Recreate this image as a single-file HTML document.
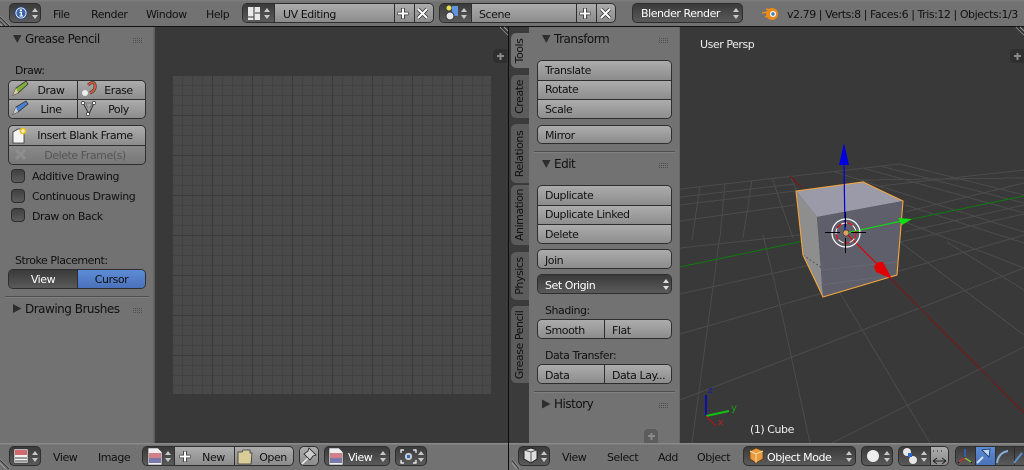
<!DOCTYPE html>
<html><head><meta charset="utf-8"><style>
html,body{margin:0;padding:0;background:#393939;width:1024px;height:470px;overflow:hidden}
body{position:relative;font:11px/20px "DejaVu Sans","Liberation Sans",sans-serif;letter-spacing:-.45px;color:#111}
div,span.t{position:absolute;box-sizing:border-box;white-space:nowrap}
svg{position:absolute;left:0;top:0;overflow:visible}
.bar{background:#727272;left:0;width:1024px}
.p{background:#727272}
.g{border:1px solid #2e2e2e;border-radius:5px;overflow:hidden}
.c{top:0;bottom:0;background:linear-gradient(#acacac,#8c8c8c);text-align:center;line-height:22px}
.r{left:0;right:0;background:linear-gradient(#acacac,#8c8c8c);text-align:center;line-height:20px}
.l{text-align:left;padding-left:7px}
.d{background:linear-gradient(#3a3a3a,#5a5a5a);color:#fff}
.x{border-left:1px solid #2e2e2e}.y{border-top:1px solid #2e2e2e}
.dis{background:linear-gradient(#8a8a8a,#777);color:#555}
.h{font-size:12px;letter-spacing:-.5px}
.tab{left:511px;width:18px;border-radius:5px 0 0 5px;background:#5c5c5c;color:#111}
.tab span{position:absolute;left:50%;top:50%;transform:translate(-50%,-50%) rotate(-90deg);line-height:14px;white-space:nowrap}
.ck{left:11px;width:14px;height:14px;border:1px solid #2e2e2e;border-radius:4px;background:linear-gradient(#404040,#5c5c5c)}
</style></head><body>

<!-- 3D viewport base -->
<div style="left:680px;top:27px;width:344px;height:416px;background:#393939"></div>
<!-- UV canvas -->
<div style="left:155px;top:27px;width:353px;height:416px;background:#393939"></div>
<div style="left:172px;top:75px;width:319px;height:319px;background-color:#494949;background-image:linear-gradient(90deg,#393939 1px,transparent 1px),linear-gradient(#393939 1px,transparent 1px),linear-gradient(90deg,#424242 1px,transparent 1px),linear-gradient(#424242 1px,transparent 1px);background-size:40px 40px,40px 40px,10px 10px,10px 10px;background-position:0 0,0 0,0 0,0 0"></div>

<!-- header -->
<div class="bar" style="top:0;height:26px;background:linear-gradient(#7c7c7c 1px,#727272 2px)"></div>
<div style="left:0;top:26px;width:1024px;height:1px;background:#111"></div>
<div class="bar" style="top:443px;height:27px;background:linear-gradient(#8a8a8a 1px,#727272 2px)"></div>
<div style="left:508px;top:27px;width:1px;height:443px;background:#0c0c0c"></div>

<!-- left sidebar -->
<div class="p" style="left:0;top:27px;width:154px;height:416px;border-right:1px solid #666"></div>
<div style="left:154px;top:27px;width:1px;height:416px;background:#5e5e5e"></div>
<svg width="1024" height="470" style="pointer-events:none">
<path d="M13 35h8.5l-4.2 8z" fill="#2e2e2e"/>
<path d="M13 304l8.5 4.5-8.5 4.5z" fill="#2e2e2e"/>
<g fill="none" stroke="#4e4e4e" stroke-dasharray="1 1"><path d="M133 38.5h10M133 40.5h10M133 42.5h10M133 308.5h10M133 310.5h10M133 312.5h10"/></g>
</svg>
<span class="t h" style="position:absolute;left:25px;top:29px">Grease Pencil</span>
<span class="t" style="position:absolute;left:15px;top:61px">Draw:</span>
<div class="g" style="left:8px;top:80px;width:138px;height:39px">
 <div class="r" style="top:0;height:18px;right:auto;width:68px;padding-left:16px">Draw</div>
 <div class="r x" style="top:0;height:18px;left:68px;padding-left:14px">Erase</div>
 <div class="r y" style="top:18px;height:19px;right:auto;width:68px;padding-left:16px">Line</div>
 <div class="r x y" style="top:18px;height:19px;left:68px;padding-left:14px">Poly</div>
</div>
<div class="g" style="left:8px;top:125px;width:138px;height:40px">
 <div class="r" style="top:0;height:19px;padding-left:16px">Insert Blank Frame</div>
 <div class="r y dis" style="top:19px;height:19px;padding-left:16px">Delete Frame(s)</div>
</div>
<div class="ck" style="top:169px"></div><span class="t" style="position:absolute;left:32px;top:167px">Additive Drawing</span>
<div class="ck" style="top:189px"></div><span class="t" style="position:absolute;left:32px;top:187px">Continuous Drawing</span>
<div class="ck" style="top:208px"></div><span class="t" style="position:absolute;left:32px;top:207px">Draw on Back</span>
<span class="t" style="position:absolute;left:15px;top:251px">Stroke Placement:</span>
<div class="g" style="left:8px;top:269px;width:138px;height:20px">
 <div class="c d" style="left:0;width:68px;line-height:20px">View</div>
 <div class="c x" style="left:68px;right:0;background:linear-gradient(#5d8cd6,#4a72ba);line-height:20px">Cursor</div>
</div>
<div style="left:5px;top:296px;width:144px;height:1px;background:#4f4f4f"></div>
<div style="left:5px;top:297px;width:144px;height:1px;background:#808080"></div>
<span class="t h" style="position:absolute;left:25px;top:299px">Drawing Brushes</span>

<!-- right tabs column -->
<div style="left:509px;top:27px;width:20px;height:416px;background:#3b3b3b"></div>
<div class="tab" style="top:33px;height:35px;background:#727272"><span>Tools</span></div>
<div class="tab" style="top:75px;height:43px"><span>Create</span></div>
<div class="tab" style="top:124px;height:59px"><span>Relations</span></div>
<div class="tab" style="top:185px;height:60px"><span>Animation</span></div>
<div class="tab" style="top:252px;height:48px"><span>Physics</span></div>
<div class="tab" style="top:306px;height:77px"><span>Grease Pencil</span></div>

<!-- right panel -->
<div class="p" style="left:529px;top:27px;width:151px;height:416px"></div>
<div style="left:679px;top:27px;width:1px;height:416px;background:#666"></div>
<svg width="1024" height="470">
<path d="M542 35h8.5l-4.2 8z" fill="#2e2e2e"/>
<path d="M542 160h8.5l-4.2 8z" fill="#2e2e2e"/>
<path d="M542 399.500l8.500 4.500-8.500 4.500z" fill="#2e2e2e"/>
<g fill="none" stroke="#4e4e4e" stroke-dasharray="1 1"><path d="M659 38.500h10M659 40.500h10M659 42.500h10M659 163.500h10M659 165.500h10M659 167.500h10M659 403.500h10M659 405.500h10M659 407.500h10"/></g>
</svg>
<span class="t h" style="position:absolute;left:554px;top:29px">Transform</span>
<div class="g" style="left:537px;top:60px;width:135px;height:59px">
 <div class="r l" style="top:0;height:19px">Translate</div>
 <div class="r l y" style="top:19px;height:20px;line-height:18px">Rotate</div>
 <div class="r l y" style="top:38px;height:20px">Scale</div>
</div>
<div class="g" style="left:537px;top:125px;width:135px;height:19px"><div class="r l" style="top:0;bottom:0">Mirror</div></div>
<div style="left:534px;top:151px;width:141px;height:1px;background:#4f4f4f"></div>
<div style="left:534px;top:152px;width:141px;height:1px;background:#808080"></div>
<span class="t h" style="position:absolute;left:554px;top:154px">Edit</span>
<div class="g" style="left:537px;top:185px;width:135px;height:59px">
 <div class="r l" style="top:0;height:19px">Duplicate</div>
 <div class="r l y" style="top:19px;height:20px;line-height:18px">Duplicate Linked</div>
 <div class="r l y" style="top:38px;height:20px">Delete</div>
</div>
<div class="g" style="left:537px;top:249px;width:135px;height:20px"><div class="r l" style="top:0;bottom:0;line-height:22px">Join</div></div>
<div class="g" style="left:537px;top:274px;width:135px;height:20px"><div class="r l d" style="top:0;bottom:0;line-height:22px">Set Origin</div></div>
<svg width="1024" height="470"><path d="M663 283l3-4 3 4zM663 286l3 4 3-4z" fill="#ddd"/></svg>
<span class="t" style="position:absolute;left:545px;top:301px">Shading:</span>
<div class="g" style="left:537px;top:319px;width:135px;height:20px">
 <div class="c l" style="left:0;width:66px">Smooth</div><div class="c l x" style="left:66px;right:0">Flat</div>
</div>
<span class="t" style="position:absolute;left:545px;top:346px">Data Transfer:</span>
<div class="g" style="left:537px;top:364px;width:135px;height:20px">
 <div class="c l" style="left:0;width:66px">Data</div><div class="c l x" style="left:66px;right:0">Data Lay...</div>
</div>
<div style="left:534px;top:391px;width:141px;height:1px;background:#4f4f4f"></div>
<div style="left:534px;top:392px;width:141px;height:1px;background:#808080"></div>
<span class="t h" style="position:absolute;left:554px;top:394px">History</span>
<div style="left:644px;top:429px;width:14px;height:14px;background:#5c5c5c;border-radius:4px 4px 0 0"></div>
<div style="left:493px;top:49px;width:14px;height:14px;background:#2f2f2f;border-radius:4px 0 0 4px"></div>
<div style="left:1010px;top:49px;width:14px;height:14px;background:#2f2f2f;border-radius:4px 0 0 4px"></div>

<!-- viewport graphics -->
<svg width="1024" height="470">
<clipPath id="v"><rect x="680" y="27" width="344" height="416"/></clipPath>
<g clip-path="url(#v)" shape-rendering="crispEdges">
<g stroke="#4a4a4a" fill="none">
<path d="M680 248L800 235M680 294L810 265M680 334L1024 235M680 400L1024 268M832 443L1024 347M900 242L1024 214"/>
<path d="M680 189L900 164M680 197L795 184M680 205L795 191M680 221L795 205M905 212L1024 183M905 232L1024 205M860 180L1024 178M880 186L1024 170"/>
<path d="M763 235L780 305L810 443M720 235L692 443M820 260L863 331L930 443M900 242L1024 335M947 242L1024 290M905 222L1024 268"/>
<path d="M900 164L1024 195M863 168L1024 213M905 205L1024 243M752 180L743 238M725 183L720 238M772 178L793 238M835 172L1024 232M790 175L796 190M700 186L692 240M880 166L1024 203"/>
</g>
<path d="M680 267L808 240" stroke="#0d7a0d"/>
<path d="M912 219L1024 196" stroke="#0d7a0d"/>
<path d="M890 278L1024 413" stroke="#7d1414"/>
<path d="M790 176L802 188" stroke="#7d1414"/>
</g>
<!-- cube -->
<path d="M796 191L863 182L903 201L817 217Z" fill="#9a9aa8"/>
<path d="M796 191L817 217L823 297L803 255Z" fill="#8e8e8e"/>
<path d="M817 217L903 201L897 275L823 297Z" fill="#5f5f6b"/>
<path d="M821 270L897 262M821 285L897 275" stroke="#686873" fill="none"/>
<path d="M796 191L803 255M803 255L822 268" stroke="#555" stroke-dasharray="2 2" fill="none"/>
<path d="M796 191L863 182L903 201L897 275L823 297L803 255Z" fill="none" stroke="#f5a63c" stroke-width="1.1"/>
<!-- manipulator -->
<path d="M845 232L844 165" stroke="#0000dd" stroke-width="1.2"/>
<path d="M844 143L849 165H839Z" fill="#0000dd"/>
<path d="M846 233L902 221" stroke="#12d812" stroke-width="1.2"/>
<path d="M912 219L898 218L902 225Z" fill="#10e010"/>
<path d="M846 233L880 267" stroke="#dd0000" stroke-width="1.2"/>
<path d="M892 279L876 272L874 266L878 262L883 262Z" fill="#e00000"/>
<circle cx="846" cy="233" r="14" fill="none" stroke="#fff" stroke-width="1.2"/>
<circle cx="846" cy="233" r="10" fill="none" stroke="#fff" stroke-width="1"/>
<circle cx="846" cy="233" r="10" fill="none" stroke="#e00000" stroke-width="1.1" stroke-dasharray="6 6"/>
<path d="M825 232.500h15M851 232.500h15M845.500 212v15M845.500 238v15" stroke="#000" stroke-width="1"/>
<circle cx="846" cy="233" r="3" fill="#e0a060" stroke="#333" stroke-width=".6"/>
<!-- axis widget -->
<path d="M706 395V416" stroke="#0000d0" stroke-width="1.5"/>
<path d="M706 416L729 411" stroke="#12c012" stroke-width="2"/>
<path d="M706 416L716 426" stroke="#c01010" stroke-width="1"/>
<text x="708" y="393" font-family="DejaVu Sans" font-size="9" fill="#1818c0">z</text>
<text x="731" y="411" font-family="DejaVu Sans" font-size="10" fill="#18a018">y</text>
<text x="718" y="425" font-family="DejaVu Sans" font-size="9" fill="#c02020">x</text>
<!-- plus marks -->
<path d="M497 56h7M500.500 53v7M1014 56h7M1017.500 53v7M648 436h7M651.500 433v7" stroke="#8a8a8a" stroke-width="2"/>
<!-- corner hatches -->
<g stroke="#9a9a9a" stroke-width="1"><path d="M0 16L10 26M0 20L6 26M0 24L2 26M0 459L10 469M0 463L6 469M512 459L520 469M512 463L517 469M1016 27L1024 35M1020 27L1024 31M500 27L508 35M504 27L508 31"/></g>
<g stroke="#333" stroke-width="1"><path d="M0 17L9 26M0 21L5 26M0 460L9 469M512 460L519 469M1017 27L1024 34M501 27L508 34"/></g>
</svg>
<span class="t" style="position:absolute;left:700px;top:35px;color:#eee">User Persp</span>
<span class="t" style="position:absolute;left:750px;top:420px;color:#eee">(1) Cube</span>

<!-- top header widgets -->
<div class="g d" style="left:9px;top:3px;width:32px;height:20px"></div>
<span class="t" style="position:absolute;left:53px;top:5px">File</span>
<span class="t" style="position:absolute;left:91px;top:5px">Render</span>
<span class="t" style="position:absolute;left:146px;top:5px">Window</span>
<span class="t" style="position:absolute;left:206px;top:5px">Help</span>

<div class="g" style="left:242px;top:3px;width:192px;height:20px">
 <div class="c d" style="left:0;width:31px"></div>
 <div class="c l x" style="left:31px;width:120px;padding-left:8px">UV Editing</div>
 <div class="c x" style="left:151px;width:20px"></div>
 <div class="c x" style="left:171px;right:0"></div>
</div>
<div class="g" style="left:439px;top:3px;width:177px;height:20px">
 <div class="c d" style="left:0;width:31px"></div>
 <div class="c l x" style="left:31px;width:105px;padding-left:7px">Scene</div>
 <div class="c x" style="left:136px;width:20px"></div>
 <div class="c x" style="left:156px;right:0"></div>
</div>
<div class="g d" style="left:632px;top:3px;width:111px;height:20px;padding-left:8px;line-height:20px">Blender Render</div>
<span class="t" style="position:absolute;left:787px;top:5px">v2.79 | Verts:8 | Faces:6 | Tris:12 | Objects:1/3</span>

<!-- footer left -->
<div class="g d" style="left:9px;top:446px;width:32px;height:20px"></div>
<span class="t" style="position:absolute;left:53px;top:448px">View</span>
<span class="t" style="position:absolute;left:98px;top:448px">Image</span>
<div class="g" style="left:142px;top:446px;width:152px;height:20px">
 <div class="c d" style="left:0;width:31px"></div>
 <div class="c x" style="left:31px;width:60px;padding-left:18px">New</div>
 <div class="c x" style="left:91px;right:0;padding-left:18px">Open</div>
</div>
<div class="g" style="left:299px;top:446px;width:20px;height:20px"><div class="c" style="left:0;right:0"></div></div>
<div class="g d" style="left:324px;top:446px;width:66px;height:20px;padding-left:23px;line-height:22px">View</div>
<div class="g d" style="left:395px;top:446px;width:32px;height:20px"></div>

<!-- footer right -->
<div class="g d" style="left:518px;top:446px;width:32px;height:20px"></div>
<span class="t" style="position:absolute;left:562px;top:448px">View</span>
<span class="t" style="position:absolute;left:607px;top:448px">Select</span>
<span class="t" style="position:absolute;left:658px;top:448px">Add</span>
<span class="t" style="position:absolute;left:697px;top:448px">Object</span>
<div class="g d" style="left:743px;top:446px;width:113px;height:20px;padding-left:23px;line-height:22px">Object Mode</div>
<div class="g d" style="left:861px;top:446px;width:32px;height:20px"></div>
<div class="g" style="left:898px;top:446px;width:51px;height:20px">
 <div class="c d" style="left:0;width:31px"></div><div class="c x" style="left:31px;right:0"></div>
</div>
<div class="g" style="left:955px;top:446px;width:80px;height:20px">
 <div class="c d" style="left:0;width:19px"></div>
 <div class="c x" style="left:19px;width:20px;background:linear-gradient(#5d8cd6,#4a72ba)"></div>
 <div class="c d x" style="left:39px;width:19px"></div>
 <div class="c d x" style="left:58px;right:0"></div>
</div>

<!-- icons -->
<svg width="1024" height="470">
<defs>
<g id="ud"><path d="M0 4l3-4 3 4zM0 7l3 4 3-4z" fill="#c8c8c8"/></g>
</defs>
<!-- info -->
<circle cx="21" cy="13" r="6" fill="#fff" stroke="#2a4a86"/><circle cx="21" cy="13" r="4.700" fill="#3a66ac"/><path d="M19.800 9.500h2.200v1.700h-2.200zM19.600 12h2.400v3.500h1v1h-3.400v-1h1v-2.500h-1z" fill="#fff"/>
<use href="#ud" x="32" y="8"/>
<!-- layout -->
<path d="M248 7h12v13h-12z" fill="#e8e8e8"/><path d="M254 7v13M255 13h5M248 17h6" stroke="#333"/>
<use href="#ud" x="264" y="8"/>
<path d="M403 8v11M397.500 13.500h11" stroke="#333" stroke-width="3.600"/><path d="M403 8.500v10M398 13.500h10" stroke="#fff" stroke-width="2"/>
<path d="M418 9l9 9M427 9l-9 9" stroke="#333" stroke-width="3.600"/><path d="M418 9l9 9M427 9l-9 9" stroke="#fff" stroke-width="2"/>
<!-- scene -->
<circle cx="449" cy="8" r="2.500" fill="#e8e050"/><rect x="452" y="6" width="6" height="10" fill="#5f94e0"/><circle cx="450" cy="16" r="4" fill="#e8e8e8" stroke="#333"/>
<use href="#ud" x="461" y="8"/>
<path d="M585 8v11M579.500 13.500h11" stroke="#333" stroke-width="3.600"/><path d="M585 8.500v10M580 13.500h10" stroke="#fff" stroke-width="2"/>
<path d="M601 9l9 9M610 9l-9 9" stroke="#333" stroke-width="3.600"/><path d="M601 9l9 9M610 9l-9 9" stroke="#fff" stroke-width="2"/>
<use href="#ud" x="733" y="8"/>
<!-- blender logo -->
<circle cx="772" cy="14" r="6" fill="#ea8a1c"/><circle cx="773" cy="14" r="3" fill="#fff"/><circle cx="773" cy="14" r="1.700" fill="#3f77b8"/><path d="M762 13l6-1M765 17l4-2M766 9l5 1" stroke="#ea8a1c" stroke-width="1.600"/>
<!-- draw icons -->
<path d="M13 95L16 88L26 81L28 84L18 93Z" fill="#7fae3a" stroke="#333" stroke-width=".8"/><path d="M13 95L16 88L18 93Z" fill="#e0c9a0"/>
<path d="M88 85q6-5 7 0q1 5-5 8" fill="none" stroke="#333" stroke-width="3"/><path d="M88 85q6-5 7 0q1 5-5 8" fill="none" stroke="#d85a3c" stroke-width="1.800"/><circle cx="85" cy="93" r="3" fill="#eee"/>
<path d="M13 114L16 107L26 101L28 104L18 112Z" fill="#4a80d0" stroke="#333" stroke-width=".8"/><path d="M13 114L16 107L18 112Z" fill="#ccc"/>
<path d="M83 103h11l-5 11z" fill="none" stroke="#333"/><path d="M85 103h7M88 108l-2-4M90 108l2-4" stroke="#777"/><circle cx="83" cy="103" r="1.600" fill="#fff" stroke="#111" stroke-width=".6"/><circle cx="94" cy="103" r="1.600" fill="#fff" stroke="#111" stroke-width=".6"/><circle cx="88" cy="114" r="1.600" fill="#fff" stroke="#111" stroke-width=".6"/>
<!-- keyframe -->
<path d="M13 132l5-3h6v14H13z" fill="#f4f4f4" stroke="#333" stroke-width=".8"/><circle cx="23" cy="131" r="3.400" fill="#e8c020"/><path d="M23 129v4M21 131h4" stroke="#fff"/>
<path d="M16 150l9 9M25 150l-9 9" stroke="#8e8e8e" stroke-width="3"/>
<!-- footer left icons -->
<rect x="14" y="449" width="14" height="14" fill="#f0f0f0" stroke="#333" stroke-width=".6"/><rect x="15" y="450" width="12" height="5" fill="#d06a70"/><path d="M15 458h12M15 461h12" stroke="#444"/><use href="#ud" x="32" y="451"/>
<g id="im"><path d="M148 448h10l4 4v13h-14z" fill="#eee" stroke="#333" stroke-width=".6"/><rect x="149" y="453" width="12" height="5" fill="#d08088"/><rect x="149" y="458" width="12" height="5" fill="#7a78a8"/></g>
<use href="#ud" x="165" y="451"/>
<path d="M185 451v11M179.500 456.500h11" stroke="#333" stroke-width="3.600"/><path d="M185 451.500v10M180 456.500h10" stroke="#fff" stroke-width="2"/>
<path d="M238 452h4l1-2h7v3h2l-1 11h-13z" fill="#d8cc98" stroke="#333" stroke-width=".8"/>
<path d="M302 464l7-7" stroke="#eee" stroke-width="1.500"/><path d="M309 448L316 455L313 456L310 460L304 454L308 451Z" fill="#ccc" stroke="#222" stroke-width=".8"/>
<use href="#im" x="181"/><use href="#ud" x="380" y="451"/>
<path d="M401 453v-3h3M413 450h3v3M416 460v3h-3M404 463h-3v-3" stroke="#fff" fill="none" stroke-width="1.200"/><rect x="405" y="453" width="7" height="7" fill="#ccc" rx="3"/><rect x="407" y="455" width="3" height="3" fill="#2a68c8"/><use href="#ud" x="418" y="451"/>
<!-- footer right icons -->
<path d="M524 450l7-2 6 2v9l-6 4-7-4z" fill="#ddd" stroke="#222"/><path d="M531 452v11M524 450l7 2 6-2" fill="none" stroke="#555"/><use href="#ud" x="541" y="451"/>
<path d="M750 451l6-3 7 3v8l-7 4-6-4z" fill="#e89a40" stroke="#5a3a10" stroke-width=".8"/><path d="M756 454v9M750 451l6 3 7-3" fill="none" stroke="#f8dca0"/><use href="#ud" x="846" y="451"/>
<circle cx="873" cy="456" r="6" fill="#eee"/><use href="#ud" x="884" y="451"/>
<circle cx="907" cy="452" r="4" fill="#e8e8e8"/><circle cx="913" cy="460" r="4" fill="#e8e8e8"/><rect x="908" y="453" width="4" height="4" fill="#2a68c8"/><use href="#ud" x="921" y="451"/>
<path d="M933 451h1m3 0h1m3 0h1M933 461l4-3M933 461l4 3M946 461l-4-3M946 461l-4 3M933 461h13" stroke="#222"/>
<path d="M965 449v9M965 458l-7 5M965 458l7 5" fill="none" stroke="#000"/><path d="M965 449v8" stroke="#3060d0" stroke-width="1.600"/><path d="M965 458l-6 4" stroke="#d03030" stroke-width="1.600"/><path d="M965 458l6 4" stroke="#80c030" stroke-width="1.600"/>
<path d="M977 463l6-6" stroke="#cde" stroke-width="2"/><path d="M990 449l-1 8-7-7z" fill="#bfd7f2" stroke="#16305f" stroke-width=".8"/>
<path d="M997 463c1-7 5-11 11-12" fill="none" stroke="#8ab0dc" stroke-width="2"/>
<path d="M1014 463l8-10" stroke="#5e8ecb" stroke-width="2"/>
</svg>
</body></html>
